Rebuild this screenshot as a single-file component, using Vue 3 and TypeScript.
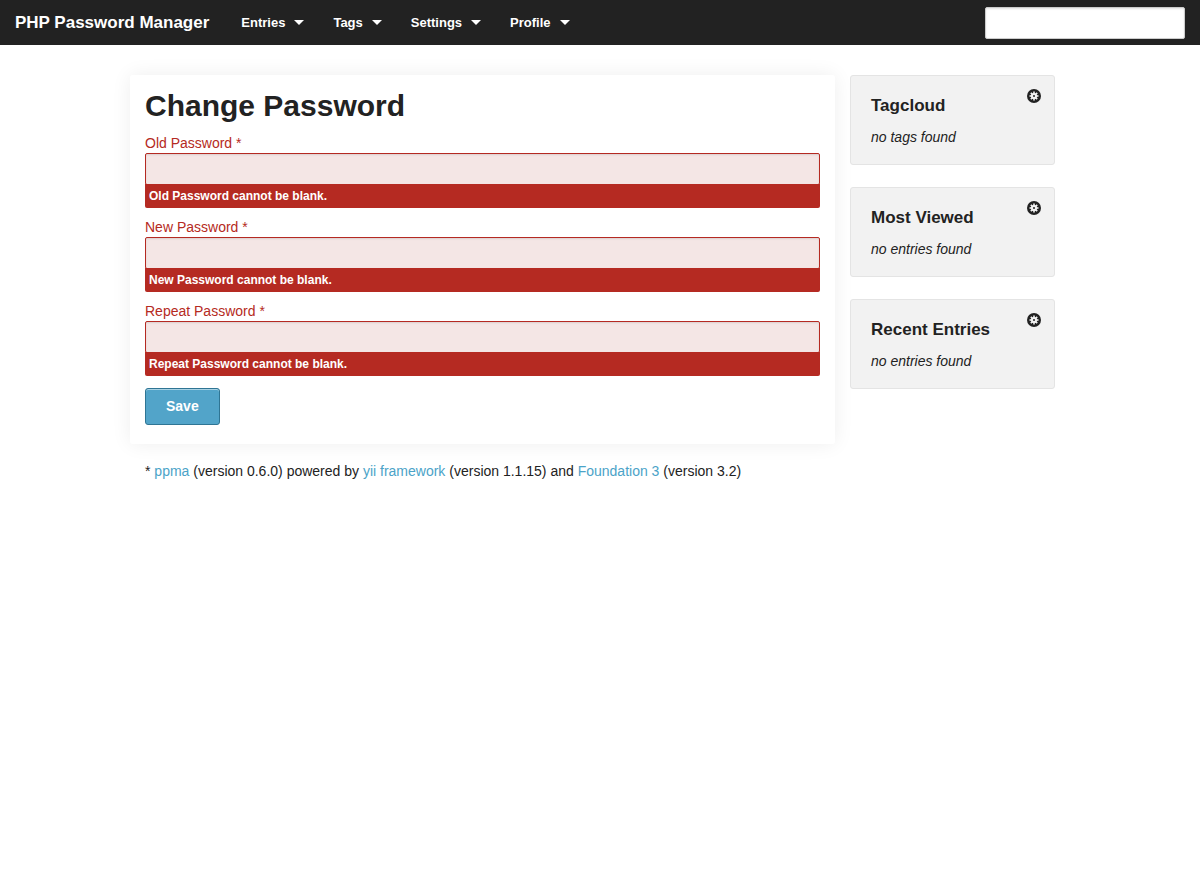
<script setup lang="ts">
import { reactive, ref } from 'vue'

interface Field {
  id: string
  label: string
  value: string
}

interface Widget {
  title: string
  empty: string
}

const menu: string[] = ['Entries', 'Tags', 'Settings', 'Profile']
const search = ref('')

const fields = reactive<Field[]>([
  { id: 'old-password', label: 'Old Password', value: '' },
  { id: 'new-password', label: 'New Password', value: '' },
  { id: 'repeat-password', label: 'Repeat Password', value: '' },
])

const widgets: Widget[] = [
  { title: 'Tagcloud', empty: 'no tags found' },
  { title: 'Most Viewed', empty: 'no entries found' },
  { title: 'Recent Entries', empty: 'no entries found' },
]

const teeth: number[] = [0, 45, 90, 135, 180, 225, 270, 315]
</script>

<template>
  <div class="page">
    <header class="topbar">
      <a class="brand" href="#">PHP Password Manager</a>
      <nav class="menu">
        <a v-for="item in menu" :key="item" class="menu-item" href="#">
          {{ item }}<span class="caret"></span>
        </a>
      </nav>
      <input v-model="search" class="search" type="text" aria-label="Search" />
    </header>

    <div class="row">
      <main class="content">
        <form class="panel" @submit.prevent>
          <h1 class="heading">Change Password</h1>
          <div v-for="field in fields" :key="field.id" class="field">
            <label class="label" :for="field.id">{{ field.label }} <span>*</span></label>
            <input :id="field.id" v-model="field.value" class="input" type="password" />
            <small v-if="!field.value" class="error">{{ field.label }} cannot be blank.</small>
          </div>
          <button class="save" type="submit">Save</button>
        </form>
        <footer class="footer">
          * <a href="#">ppma</a> (version 0.6.0) powered by <a href="#">yii framework</a> (version
          1.1.15) and <a href="#">Foundation 3</a> (version 3.2)
        </footer>
      </main>

      <aside class="sidebar">
        <section v-for="widget in widgets" :key="widget.title" class="widget">
          <h2 class="widget-title">{{ widget.title }}</h2>
          <p class="widget-text">{{ widget.empty }}</p>
          <button class="gear" type="button" :aria-label="`${widget.title} settings`">
            <svg viewBox="0 0 28 28" width="14" height="14" aria-hidden="true">
              <circle cx="14" cy="14" r="14" fill="#222" />
              <g fill="#f2f2f2">
                <rect
                  v-for="angle in teeth"
                  :key="angle"
                  x="12.4"
                  y="5"
                  width="3.2"
                  height="5"
                  :transform="`rotate(${angle} 14 14)`"
                />
                <circle cx="14" cy="14" r="6.2" />
              </g>
              <circle cx="14" cy="14" r="2" fill="#222" />
            </svg>
          </button>
        </section>
      </aside>
    </div>
  </div>
</template>

<style>
body {
  margin: 0;
  background: #fff;
}
</style>

<style scoped>
.page,
.page * {
  box-sizing: border-box;
}

.page {
  font-family: "Helvetica Neue", "Liberation Sans", Arial, sans-serif;
  font-size: 14px;
  line-height: 20px;
  color: #222;
}

.topbar {
  display: flex;
  align-items: center;
  height: 45px;
  padding: 0 15px;
  background: #222;
}

.brand {
  margin-right: 32px;
  font-size: 17px;
  line-height: 22px;
  font-weight: bold;
  color: #fff;
  text-decoration: none;
}

.menu {
  display: flex;
  gap: 29px;
}

.menu-item {
  display: flex;
  align-items: center;
  gap: 9px;
  font-size: 13px;
  font-weight: bold;
  color: #fff;
  text-decoration: none;
}

.caret {
  border: 5px solid transparent;
  border-top-color: #fff;
  border-bottom-width: 0;
}

.search {
  width: 200px;
  height: 32px;
  margin-left: auto;
  padding: 4px;
  border: 1px solid #ccc;
  border-radius: 2px;
  background: #fff;
  box-shadow: inset 0 1px 2px rgba(0, 0, 0, 0.1);
  font: inherit;
}

.row {
  display: flex;
  gap: 15px;
  max-width: 940px;
  margin: 30px auto 0;
  padding-right: 15px;
}

.content {
  flex: 1;
}

.panel {
  padding: 11px 15px 19px;
  border-radius: 3px;
  box-shadow: 0 0 20px rgba(0, 0, 0, 0.07);
}

.heading {
  margin: 0 0 10px;
  font-size: 30px;
  line-height: 40px;
  font-weight: bold;
}

.field {
  display: flex;
  flex-direction: column;
  margin-bottom: 12px;
}

.label {
  margin-bottom: 3px;
  line-height: 14px;
  font-weight: 500;
  color: #b52a22;
}

.input {
  width: 100%;
  height: 32px;
  margin-bottom: -1px;
  padding: 6px 4px;
  border: 1px solid #b52a22;
  border-radius: 2px;
  background: #f4e6e5;
  box-shadow: inset 0 1px 2px rgba(0, 0, 0, 0.1);
  font: inherit;
}

.error {
  padding: 2px 4px;
  border-radius: 0 0 2px 2px;
  background: #b52a22;
  font-size: 12px;
  font-weight: bold;
  color: #fff;
}

.save {
  display: block;
  height: 37px;
  padding: 0 20px 2px;
  border: 1px solid #2f7594;
  border-radius: 3px;
  background: #52a4c9;
  box-shadow: inset 0 1px 0 rgba(255, 255, 255, 0.5);
  font: inherit;
  font-weight: bold;
  color: #fff;
}

.footer {
  padding: 17px 15px;
}

.footer a {
  color: #4ba3c8;
  text-decoration: none;
}

.sidebar {
  display: flex;
  flex-direction: column;
  gap: 22px;
  width: 205px;
}

.widget {
  position: relative;
  padding: 19px 20px 17px;
  border: 1px solid #e4e4e4;
  border-radius: 3px;
  background: #f2f2f2;
}

.widget-title {
  margin: 0 0 10px;
  font-size: 17px;
  line-height: 22px;
  font-weight: bold;
}

.widget-text {
  margin: 0;
  font-style: italic;
}

.gear {
  position: absolute;
  top: 13px;
  right: 13px;
  display: flex;
  padding: 0;
  border: 0;
  background: none;
}
</style>
